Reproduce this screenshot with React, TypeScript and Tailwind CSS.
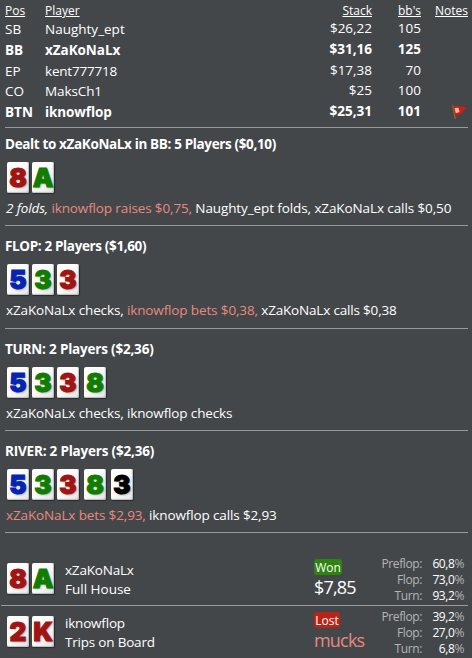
import type { ReactNode } from "react";

type CardData = [rank: string, tone: "red" | "green" | "blue" | "black"];

const toneClass = {
  red: "text-[#a01414]",
  green: "text-[#0f7d00]",
  blue: "text-[#0523b4]",
  black: "text-black",
};

function Card({ card, spaced }: { card: CardData; spaced?: boolean }) {
  return (
    <div
      className={`flex h-[31px] w-[22px] shrink-0 items-center justify-center rounded-[2px] bg-linear-to-br from-white via-[#fafafa] to-[#e4e4e4] shadow-[0.5px_1px_1px_rgba(0,0,0,0.4),inset_-1px_-1px_1px_#bcbcbc] ${spaced ? "ml-[2px]" : ""}`}
    >
      <span
        className={`font-['Inter'] text-[26px] leading-[31px] font-black [-webkit-text-stroke:1px_currentColor] [text-shadow:1px_1px_2px_rgba(0,0,0,0.35)] ${toneClass[card[1]]}`}
      >
        {card[0]}
      </span>
    </div>
  );
}

function Cards({ cards }: { cards: CardData[] }) {
  return (
    <div className="flex gap-[3px] pl-[2px]">
      {cards.map((card, i) => (
        <Card key={i} card={card} spaced={i > 2} />
      ))}
    </div>
  );
}

const players = [
  { pos: "SB", name: "Naughty_ept", stack: "$26,22", bbs: "105", row: "h-[20px]", nameTrack: "tracking-[0px]" },
  { pos: "BB", name: "xZaKoNaLx", stack: "$31,16", bbs: "125", bold: true, row: "h-[21px]", nameTrack: "tracking-[-0.05px]" },
  { pos: "EP", name: "kent777718", stack: "$17,38", bbs: "70", row: "h-[20px]", nameTrack: "tracking-[-0.2px]" },
  { pos: "CO", name: "MaksCh1", stack: "$25", bbs: "100", row: "h-[21px]", nameTrack: "tracking-[-0.1px]" },
  { pos: "BTN", name: "iknowflop", stack: "$25,31", bbs: "101", bold: true, flag: true, row: "h-[21px]", nameTrack: "tracking-[-0.1px]" },
];

function Flag() {
  return (
    <svg width="17" height="17" viewBox="0 0 17 17">
      <path d="M1.7 1 L4.4 15" stroke="#85602a" strokeWidth="1.5" />
      <path d="M2.5 2.3 Q8 1.6 16 3.8 Q12 6.5 10.5 9.5 Q7 10 4.2 11.8 Z" fill="#dd170f" />
      <path d="M3.6 4 L7.4 3.8 L8.6 8 L4.8 9.2 Z" fill="#e9bf9c" />
    </svg>
  );
}

function Street({ title, cards, children, height }: { title: ReactNode; cards: CardData[]; children: ReactNode; height: string }) {
  return (
    <section className={`ml-[5px] w-[463px] border-b border-[#999a9b] ${height}`}>
      <h2 className="text-[13.5px] leading-[18px] font-bold whitespace-nowrap">{title}</h2>
      <div className="pt-[9px]">
        <Cards cards={cards} />
      </div>
      <p className="mt-[6px] pl-[1px] text-[13.5px] leading-[18px] tracking-[-0.13px] whitespace-nowrap">{children}</p>
    </section>
  );
}

function Odds({ values }: { values: string[] }) {
  return (
    <div className="ml-auto grid w-[95px] grid-cols-[53px_42px] pt-px text-right text-[12px] leading-[16px] text-[#b4b5b6]">
      {["Preflop:", "Flop:", "Turn:"].map((label, i) => (
        <div key={label} className="contents">
          <span className="tracking-[-0.4px]">{label}</span>
          <span className="tracking-[-0.4px]">
            <span className="text-white">{values[i]}</span>%
          </span>
        </div>
      ))}
    </div>
  );
}

export default function App() {
  return (
    <main className="h-[658px] w-[472px] overflow-hidden bg-[#44474a] font-['Open_Sans','Noto_Sans',sans-serif] text-white">
      <section className="ml-[5px] h-[128px] w-[463px] border-b border-[#999a9b]">
        <div className="grid h-[19px] grid-cols-[40px_200px_1fr_49px_47px] pt-[2px] text-[12px] leading-[18px] underline">
          <span>Pos</span>
          <span>Player</span>
          <span className="text-right">Stack</span>
          <span className="text-right">bb's</span>
          <span className="text-right">Notes</span>
        </div>
        {players.map((p) => (
          <div
            key={p.pos}
            className={`grid grid-cols-[40px_200px_1fr_49px_47px] text-[13.5px] leading-[20px] ${p.row} ${p.bold ? "font-bold" : ""}`}
          >
            <span className={p.pos === "SB" ? "" : "pt-px"}>{p.pos}</span>
            <span className={`${p.pos === "SB" ? "" : "pt-px"} ${p.nameTrack}`}>{p.name}</span>
            <span className={p.pos === "SB" ? "-mt-px text-right" : "text-right"}>{p.stack}</span>
            <span className={p.pos === "SB" ? "-mt-px text-right" : "text-right"}>{p.bbs}</span>
            <span className="flex justify-end pt-[3px]">{p.flag && <Flag />}</span>
          </div>
        ))}
      </section>

      <Street
        title={<span className="tracking-[-0.36px]">Dealt to xZaKoNaLx in BB: 5 Players ($0,10)</span>}
        cards={[["8", "red"], ["A", "green"]]}
        height="h-[98px] pt-[7px]"
      >
        <i>2 folds, </i>
        <span className="text-[#e8897f]">iknowflop raises $0,75, </span>
        <span className="tracking-[-0.1px]">Naughty_ept folds, xZaKoNaLx calls $0,50</span>
      </Street>
      <Street
        title={<span className="tracking-[-0.36px]">FLOP: 2 Players ($1,60)</span>}
        cards={[["5", "blue"], ["3", "green"], ["3", "red"]]}
        height="h-[103px] pt-[11px]"
      >
        <span>xZaKoNaLx checks, </span>
        <span className="text-[#e8897f]">iknowflop bets $0,38, </span>
        <span className="tracking-[-0.18px]">xZaKoNaLx calls $0,38</span>
      </Street>
      <Street
        title={<span className="tracking-[-0.2px]">TURN: 2 Players ($2,36)</span>}
        cards={[["5", "blue"], ["3", "green"], ["3", "red"], ["8", "green"]]}
        height="h-[102px] pt-[11px]"
      >
        <span>xZaKoNaLx checks, iknowflop checks</span>
      </Street>
      <Street
        title={<span className="tracking-[-0.2px]">RIVER: 2 Players ($2,36)</span>}
        cards={[["5", "blue"], ["3", "green"], ["3", "red"], ["8", "green"], ["3", "black"]]}
        height="h-[102px] pt-[11px]"
      >
        <span className="text-[#e8897f]">xZaKoNaLx bets $2,93, </span>
        <span>iknowflop calls $2,93</span>
      </Street>

      <section className="ml-px flex h-[73px] w-[467px] border-b border-[#999a9b] pt-[22px]">
        <div className="w-[64px] pt-[8px] pl-[4px]">
          <Cards cards={[["8", "red"], ["A", "green"]]} />
        </div>
        <div className="w-[249px] pt-[6px] text-[13.5px] leading-[19px] tracking-[-0.2px]">
          <div>xZaKoNaLx</div>
          <div className="tracking-normal">Full House</div>
        </div>
        <div className="pt-[4px]">
          <div className="h-[16px] w-[28px] rounded-[3px] bg-[#2e8311] text-center text-[12px] leading-[17px]">Won</div>
          <div className="text-[18px] leading-[25px] tracking-[-0.8px]">$7,85</div>
        </div>
        <div className="ml-auto pr-[4px]">
          <Odds values={["60,8", "73,0", "93,2"]} />
        </div>
      </section>
      <section className="ml-px flex h-[52px] w-[467px] pt-[2px]">
        <div className="w-[64px] pt-[8px] pl-[4px]">
          <Cards cards={[["2", "red"], ["K", "red"]]} />
        </div>
        <div className="w-[249px] pt-[6px] text-[13.5px] leading-[19px] tracking-[-0.2px]">
          <div>iknowflop</div>
          <div>Trips on Board</div>
        </div>
        <div className="pt-[4px]">
          <div className="h-[16px] w-[26px] rounded-[3px] bg-[#b92318] text-center text-[12px] leading-[17px]">Lost</div>
          <div className="text-[18px] leading-[25px] tracking-[-0.8px] text-[#e8897f]">mucks</div>
        </div>
        <div className="ml-auto pr-[4px]">
          <Odds values={["39,2", "27,0", "6,8"]} />
        </div>
      </section>
    </main>
  );
}
